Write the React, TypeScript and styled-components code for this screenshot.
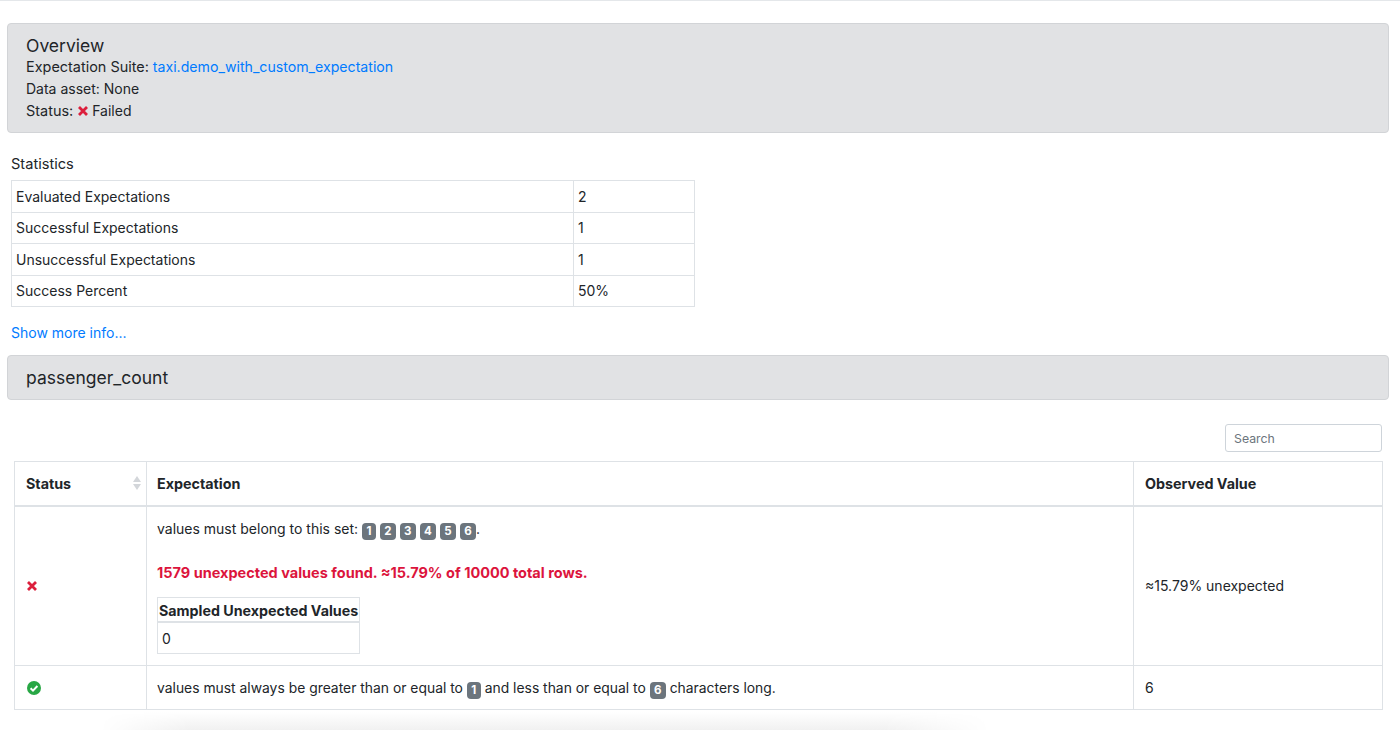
import React from 'react'
import styled, { createGlobalStyle } from 'styled-components'

const GlobalStyle = createGlobalStyle`
    html, body {
        margin: 0;
        padding: 0;
        height: 730px;
        overflow: hidden;
        background: #fff;
        font-family: Inter, 'Liberation Sans', sans-serif;
        font-size: 14px;
        line-height: 21.6px;
        color: #212529;
    }
`

const Page = styled.div`
    border-top: 1px solid #e4e7ea;
    padding: 22px 11px 0 7px;
`

const Card = styled.div<{ $bodyHeight: number }>`
    box-sizing: border-box;
    height: ${p => p.$bodyHeight}px;
    background: #e1e2e4;
    border: 1px solid #d2d4d7;
    border-radius: 4px;
    padding: 11px 18px 0;
`

const CardTitle = styled.h5`
    margin: 0;
    font-size: 17.5px;
    line-height: 21px;
    font-weight: 400;
`

const Line = styled.div`
    height: 22px;
    line-height: 22px;
`

const LineLabel = styled.span`
    font-size: 14.45px;
`

const Link = styled.a`
    color: #007bff;
    text-decoration: none;
`

const SuiteLink = styled(Link)`
    font-size: 14.15px;
`

const FailedText = styled.span`
    margin-left: 3px;
`

const StatsLabel = styled.div`
    margin: 21px 0 5px 4px;
    height: 21px;
    font-size: 14.6px;
`

const StatsTable = styled.table`
    margin-left: 4px;
    width: 684px;
    border-collapse: collapse;
    table-layout: fixed;
    td {
        border: 1px solid #dee2e6;
        padding: 0 4px;
        height: 30.6px;
    }
`

const MoreLink = styled(Link)`
    display: block;
    margin: 15px 0 12px 4px;
    height: 21px;
    line-height: 21px;
`

const SearchRow = styled.div`
    display: flex;
    justify-content: flex-end;
    margin: 24px 7px 9px 0;
`

const SearchInput = styled.input`
    box-sizing: border-box;
    width: 157px;
    height: 28px;
    padding: 0 8px;
    border: 1px solid #ced4da;
    border-radius: 3px;
    font-family: inherit;
    font-size: 12.3px;
    &::placeholder {
        color: #6c757d;
        opacity: 1;
    }
`

const ResultsTable = styled.table`
    margin-left: 7px;
    width: 1369px;
    border-collapse: collapse;
    table-layout: fixed;
    th, td {
        border: 1px solid #dee2e6;
        padding: 0 11px;
        text-align: left;
    }
    th:nth-child(2), td:nth-child(2) {
        padding-left: 10px;
    }
    th {
        height: 43px;
        border-bottom-width: 2px;
        font-size: 14.3px;
        font-weight: 700;
        position: relative;
    }
`

const SortCarets = styled.svg`
    position: absolute;
    right: 5px;
    top: 14px;
`

const FailRow = styled.tr`
    height: 159px;
`

const PassRow = styled.tr`
    height: 44px;
    td:nth-child(-n+2) {
        padding-top: 2px;
    }
    td:nth-child(2) {
        font-size: 13.88px;
    }
`

const Badge = styled.span`
    display: inline-block;
    box-sizing: border-box;
    min-width: 14px;
    height: 17px;
    padding: 0 4.3px;
    border-radius: 4px;
    background: #6c757d;
    color: #fff;
    font-size: 11.5px;
    font-weight: 700;
    line-height: 17px;
    text-align: center;
    vertical-align: -1px;
`

const SetLine = styled.p`
    margin: 0 0 22px;
`

const FailMessage = styled.p`
    margin: 0 0 14px;
    color: #dc143c;
    font-size: 14.5px;
    font-weight: 700;
`

const SampleTable = styled.table`
    border-collapse: collapse;
    th, td {
        border: 1px solid #dee2e6;
        padding: 0;
    }
    th {
        height: 22px;
        padding: 1px 1px 0;
        border-bottom-width: 2px;
        font-size: 14.25px;
        line-height: 21px;
        font-weight: 700;
    }
    td {
        height: 30px;
        padding: 0 4px;
    }
`

const BottomShade = styled.div`
    position: absolute;
    left: 100px;
    top: 712px;
    width: 890px;
    height: 18px;
    background: linear-gradient(#fff, #f1f1f1);
    mask-image: linear-gradient(90deg, transparent, #000 10%, #000 88%, transparent);
`

const CrossIcon = () => (
    <svg width="12" height="12" viewBox="0 0 12 12" style={{ verticalAlign: '-1px' }}>
        <path d="M2 2 L10 10 M10 2 L2 10" stroke="#dc1f3c" strokeWidth="2.8" fill="none" />
    </svg>
)

const CheckIcon = () => (
    <svg width="14" height="14" viewBox="0 0 14 14" style={{ display: 'block', marginLeft: 1 }}>
        <circle cx="7" cy="7" r="7" fill="#28a745" />
        <path d="M3.6 7.2 L6 9.6 L10.4 5" stroke="#fff" strokeWidth="2" fill="none" />
    </svg>
)

const stats = [
    ['Evaluated Expectations', '2'],
    ['Successful Expectations', '1'],
    ['Unsuccessful Expectations', '1'],
    ['Success Percent', '50%'],
]

export default function App() {
    return (
        <>
            <GlobalStyle />
            <Page>
                <Card $bodyHeight={110}>
                    <CardTitle>Overview</CardTitle>
                    <Line><LineLabel>Expectation Suite:</LineLabel> <SuiteLink href="#">taxi.demo_with_custom_expectation</SuiteLink></Line>
                    <Line>Data asset: None</Line>
                    <Line><LineLabel>Status:</LineLabel> <CrossIcon /><FailedText>Failed</FailedText></Line>
                </Card>

                <StatsLabel>Statistics</StatsLabel>
                <StatsTable>
                    <colgroup>
                        <col style={{ width: 562 }} />
                        <col />
                    </colgroup>
                    <tbody>
                        {stats.map(([label, value]) => (
                            <tr key={label}>
                                <td>{label}</td>
                                <td>{value}</td>
                            </tr>
                        ))}
                    </tbody>
                </StatsTable>
                <MoreLink href="#">Show more info...</MoreLink>

                <Card $bodyHeight={45}>
                    <CardTitle>passenger_count</CardTitle>
                </Card>

                <SearchRow>
                    <SearchInput placeholder="Search" />
                </SearchRow>

                <ResultsTable>
                    <colgroup>
                        <col style={{ width: 132 }} />
                        <col style={{ width: 987 }} />
                        <col />
                    </colgroup>
                    <thead>
                        <tr>
                            <th>
                                Status
                                <SortCarets width="8" height="14" viewBox="0 0 8 14">
                                    <path d="M4 0 L8 6 H0 Z" fill="#d3d6da" />
                                    <path d="M4 14 L8 8 H0 Z" fill="#d3d6da" />
                                </SortCarets>
                            </th>
                            <th>Expectation</th>
                            <th>Observed Value</th>
                        </tr>
                    </thead>
                    <tbody>
                        <FailRow>
                            <td><CrossIcon /></td>
                            <td>
                                <SetLine>
                                    values must belong to this set: <Badge>1</Badge> <Badge>2</Badge> <Badge>3</Badge> <Badge>4</Badge> <Badge>5</Badge> <Badge>6</Badge>.
                                </SetLine>
                                <FailMessage>1579 unexpected values found. ≈15.79% of 10000 total rows.</FailMessage>
                                <SampleTable>
                                    <thead>
                                        <tr><th>Sampled Unexpected Values</th></tr>
                                    </thead>
                                    <tbody>
                                        <tr><td>0</td></tr>
                                    </tbody>
                                </SampleTable>
                            </td>
                            <td>≈15.79% unexpected</td>
                        </FailRow>
                        <PassRow>
                            <td><CheckIcon /></td>
                            <td>values must always be greater than or equal to <Badge>1</Badge> and less than or equal to <Badge>6</Badge> characters long.</td>
                            <td>6</td>
                        </PassRow>
                    </tbody>
                </ResultsTable>
            </Page>
            <BottomShade />
        </>
    )
}
